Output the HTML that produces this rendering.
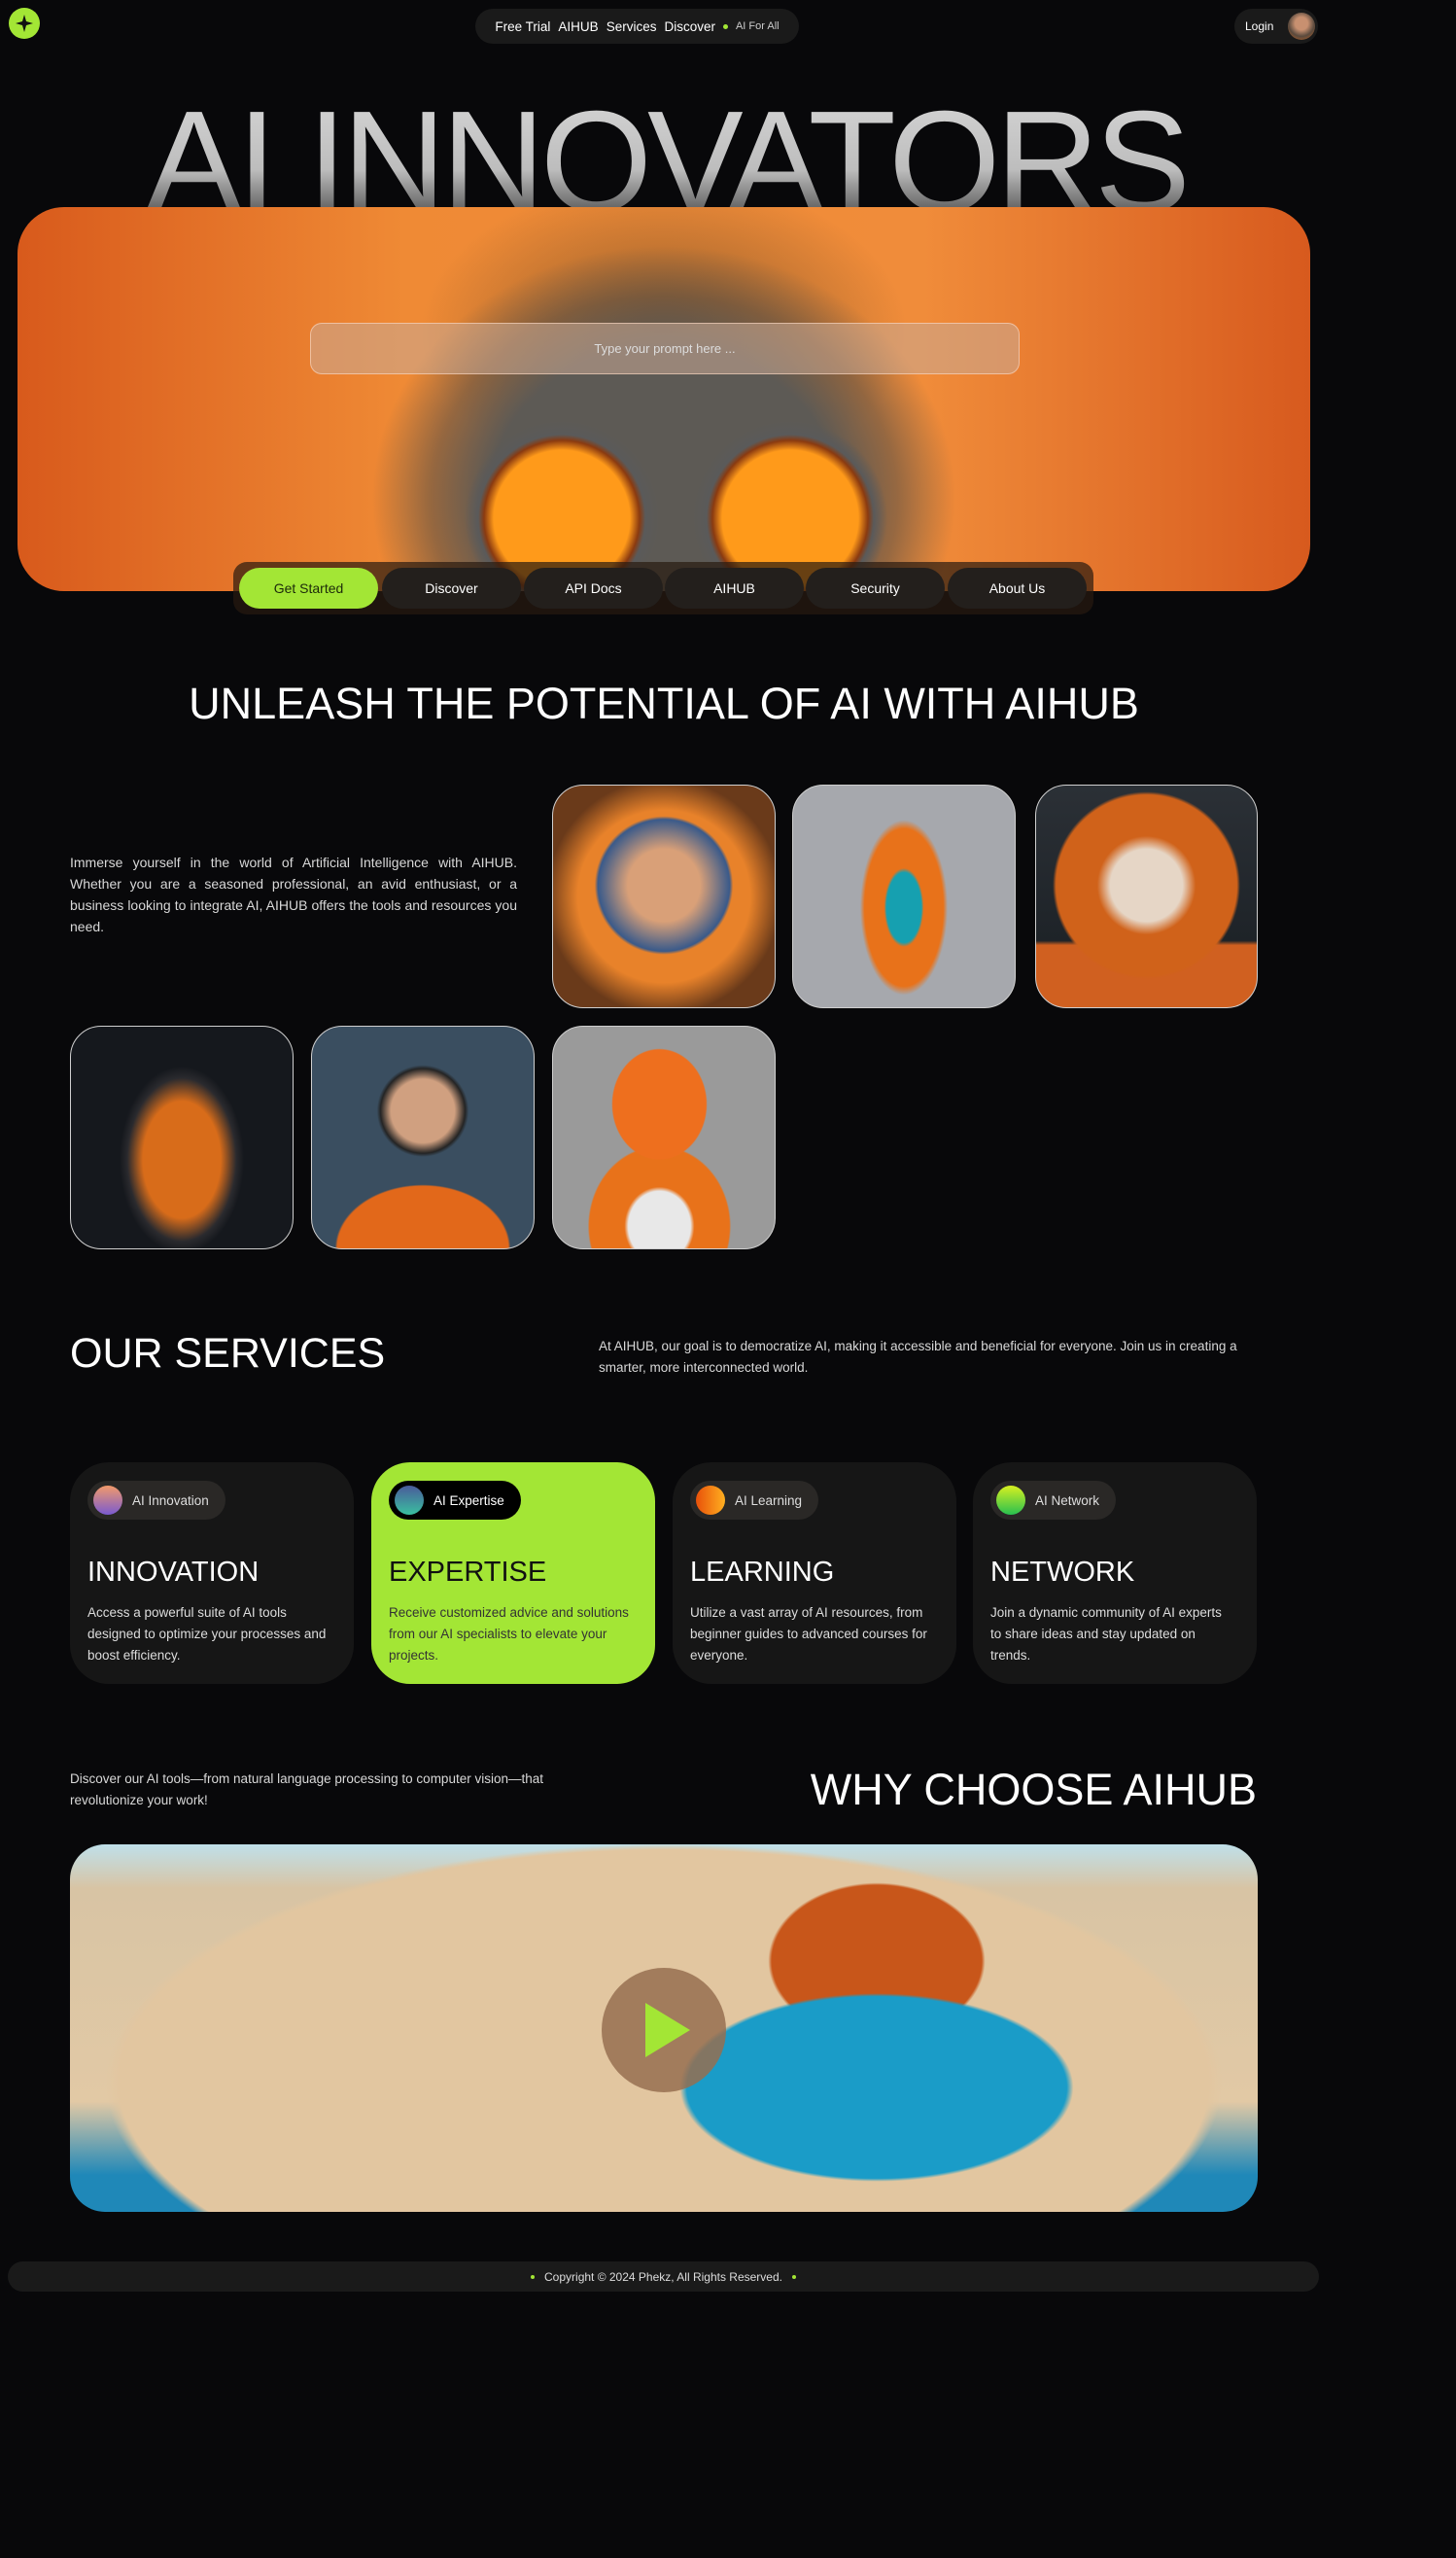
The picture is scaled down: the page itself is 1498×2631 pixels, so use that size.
<!DOCTYPE html>
<html><head><meta charset="utf-8"><style>
*{margin:0;padding:0;box-sizing:border-box}
body{width:1498px;height:2631px;background:#08080a;font-family:"Liberation Sans",sans-serif;color:#fff;position:relative;overflow:hidden}
.a{position:absolute}
.logo{left:9px;top:8px;width:32px;height:32px;border-radius:50%;background:#a3e635;display:flex;align-items:center;justify-content:center}
.nav{left:489px;top:9px;width:333px;height:36px;border-radius:18px;background:#1a1a1a;display:flex;align-items:center;justify-content:center;gap:8px;font-size:13.5px}
.nav .dot{width:5px;height:5px;border-radius:50%;background:#a3e635}
.login{left:1270px;top:9px;width:86px;height:36px;border-radius:18px;background:#1a1a1a;font-size:12px;display:flex;align-items:center;padding-left:11px}
.av{position:absolute;right:3px;top:4px;width:28px;height:28px;border-radius:50%;background:radial-gradient(circle at 50% 40%,#c89070 0 30%,#5a4a3e 60%,#c06020 100%)}
.title{left:0;width:1370px;top:92px;text-align:center;font-size:148px;letter-spacing:-5px;line-height:150px;font-weight:400;background:linear-gradient(#d6d6d6 0%,#bdbdbd 55%,#2a2a2a 100%);-webkit-background-clip:text;background-clip:text;color:transparent}
.hero{left:18px;top:213px;width:1330px;height:395px;border-radius:48px;overflow:hidden;background:
radial-gradient(circle at 560px 320px,#ff9a1a 0 70px,#8a3a10 80px,#5a5a5a 86px,transparent 100px),
radial-gradient(circle at 795px 320px,#ff9a1a 0 70px,#8a3a10 80px,#5a5a5a 86px,transparent 100px),
radial-gradient(ellipse 300px 260px at 665px 300px,#5d5a55 0 60%,rgba(90,80,70,.6) 80%,transparent 100%),
radial-gradient(ellipse 250px 160px at 665px 130px,rgba(120,80,40,.8),transparent 100%),
linear-gradient(90deg,#d85a1c,#ef8a35 30%,#f08c3a 70%,#d75a1e)}
.prompt{left:319px;top:332px;width:730px;height:53px;border-radius:12px;background:rgba(200,170,150,.55);border:1px solid rgba(255,220,200,.6);text-align:center;line-height:52px;font-size:13px;color:#ddd}
.btns{left:240px;top:578px;width:885px;height:54px;border-radius:14px;background:rgba(40,25,15,.7)}
.btn{top:584px;width:143px;height:42px;border-radius:21px;background:#231f1c;font-size:14px;display:flex;align-items:center;justify-content:center}
h2{position:absolute;font-weight:400}
.p{font-size:14px;line-height:22px;color:#d8d8d8}
.img{border-radius:32px;border:1px solid #cfcfcf;overflow:hidden}
.card{top:1504px;width:292px;height:228px;border-radius:40px;background:#161616}
.pill{position:absolute;left:18px;top:19px;height:40px;border-radius:20px;background:#2a2826;display:flex;align-items:center;padding:0 17px 0 6px;font-size:13.5px;color:#ddd;gap:10px}
.pill i{width:30px;height:30px;border-radius:50%;display:block}
.card h3{position:absolute;left:18px;top:97px;font-size:29px;font-weight:400}
.card p{position:absolute;left:18px;top:144px;width:250px;font-size:13.5px;line-height:22px;color:#ddd}
</style></head><body>
<div class="a logo"><svg width="20" height="20" viewBox="0 0 20 20"><path d="M10 1 L12 8 L19 10 L12 12 L10 19 L8 12 L1 10 L8 8Z" fill="#111"/></svg></div>
<div class="a nav"><span>Free Trial</span><span>AIHUB</span><span>Services</span><span>Discover</span><span class="dot"></span><span style="font-size:11px;color:#ccc">AI For All</span></div>
<div class="a login">Login<span class="av"></span></div>
<div class="a title">AI INNOVATORS</div>
<div class="a hero"></div>
<div class="a prompt">Type your prompt here ...</div>
<div class="a btns"></div>
<div class="a btn" style="left:246px;background:#a3e635;color:#1c2a0a">Get Started</div>
<div class="a btn" style="left:393px">Discover</div>
<div class="a btn" style="left:539px">API Docs</div>
<div class="a btn" style="left:684px">AIHUB</div>
<div class="a btn" style="left:829px">Security</div>
<div class="a btn" style="left:975px">About Us</div>
<h2 style="left:0;width:1366px;text-align:center;top:698px;font-size:45px">UNLEASH THE POTENTIAL OF AI WITH AIHUB</h2>
<div class="a p" style="left:72px;top:876px;width:460px;text-align:justify">Immerse yourself in the world of Artificial Intelligence with AIHUB. Whether you are a seasoned professional, an avid enthusiast, or a business looking to integrate AI, AIHUB offers the tools and resources you need.</div>
<div class="a img" style="left:568px;top:807px;width:230px;height:230px;background:radial-gradient(circle at 50% 45%,#d9a078 0 22%,#3a5a8a 40%,transparent 42%),radial-gradient(circle at 50% 50%,#e8822a 0 55%,#6a3a1a 75%)"></div>
<div class="a img" style="left:815px;top:807px;width:230px;height:230px;background:radial-gradient(ellipse 45px 90px at 50% 55%,#16a0b0 0 40%,#e8721a 45% 90%,transparent 100%),#a6a8ad"></div>
<div class="a img" style="left:1065px;top:807px;width:229px;height:230px;background:radial-gradient(circle at 50% 45%,#e6d6c6 0 22%,#d0621a 30% 55%,transparent 57%),linear-gradient(#2b3036,#1e2328 70%,#d06020 72%)"></div>
<div class="a img" style="left:72px;top:1055px;width:230px;height:230px;background:radial-gradient(ellipse 80px 120px at 50% 60%,#d86c1a 0 50%,#2a2a2e 70%,transparent 80%),#15181d"></div>
<div class="a img" style="left:320px;top:1055px;width:230px;height:230px;background:radial-gradient(circle at 50% 38%,#d0a080 0 18%,#242424 24%,transparent 26%),radial-gradient(ellipse 110px 80px at 50% 100%,#e2681a 0 80%,transparent 82%),#3a4e60"></div>
<div class="a img" style="left:568px;top:1055px;width:230px;height:230px;background:radial-gradient(ellipse 60px 70px at 48% 35%,#ee6f1e 0 80%,transparent 82%),radial-gradient(ellipse 80px 90px at 48% 90%,#e8e8e8 0 40%,#e8721a 45% 90%,transparent 92%),#9a9a9a"></div>
<h2 style="left:72px;top:1368px;font-size:43px">OUR SERVICES</h2>
<div class="a p" style="left:616px;top:1374px;width:690px;font-size:13.5px">At AIHUB, our goal is to democratize AI, making it accessible and beneficial for everyone. Join us in creating a smarter, more interconnected world.</div>
<div class="a card" style="left:72px"><div class="pill"><i style="background:linear-gradient(#f29a6a,#7a5ad0)"></i>AI Innovation</div><h3>INNOVATION</h3><p>Access a powerful suite of AI tools designed to optimize your processes and boost efficiency.</p></div>
<div class="a card" style="left:382px;background:#a3e635;color:#111"><div class="pill" style="background:#000;color:#fff"><i style="background:linear-gradient(#4a5a9a,#3ac0a0)"></i>AI Expertise</div><h3>EXPERTISE</h3><p style="color:#333">Receive customized advice and solutions from our AI specialists to elevate your projects.</p></div>
<div class="a card" style="left:692px"><div class="pill"><i style="background:linear-gradient(90deg,#e8500a,#ffb020)"></i>AI Learning</div><h3>LEARNING</h3><p>Utilize a vast array of AI resources, from beginner guides to advanced courses for everyone.</p></div>
<div class="a card" style="left:1001px"><div class="pill"><i style="background:linear-gradient(#d8f020,#28c050)"></i>AI Network</div><h3>NETWORK</h3><p>Join a dynamic community of AI experts to share ideas and stay updated on trends.</p></div>
<div class="a p" style="left:72px;top:1819px;width:560px;font-size:13.5px">Discover our AI tools—from natural language processing to computer vision—that revolutionize your work!</div>
<h2 style="right:205px;top:1815px;font-size:45px">WHY CHOOSE AIHUB</h2>
<div class="a" style="left:72px;top:1897px;width:1222px;height:378px;border-radius:36px;overflow:hidden;background:radial-gradient(ellipse 230px 110px at 830px 250px,#1a9cc8 0 85%,transparent 88%),radial-gradient(ellipse 180px 130px at 830px 120px,#c8561a 0 60%,transparent 62%),radial-gradient(ellipse 700px 300px at 50% 65%,#e2c6a0 0 80%,transparent 82%),linear-gradient(#bfe0ea 0,#d8c4a4 12%,#e2c9a5 70%,#1f88b8 90%)"></div>
<div class="a" style="left:619px;top:2024px;width:128px;height:128px;border-radius:50%;background:rgba(150,110,80,.85)"></div>
<svg class="a" style="left:662px;top:2058px" width="50" height="60" viewBox="0 0 50 60"><path d="M2 2 L48 30 L2 58Z" fill="#a3e635"/></svg>
<div class="a" style="left:8px;top:2326px;width:1349px;height:31px;border-radius:16px;background:#1a1a1a;display:flex;align-items:center;justify-content:center;gap:10px;font-size:12px;color:#ddd"><span style="width:4px;height:4px;border-radius:50%;background:#a3e635"></span>Copyright © 2024 Phekz, All Rights Reserved.<span style="width:4px;height:4px;border-radius:50%;background:#a3e635"></span></div>
</body></html>
